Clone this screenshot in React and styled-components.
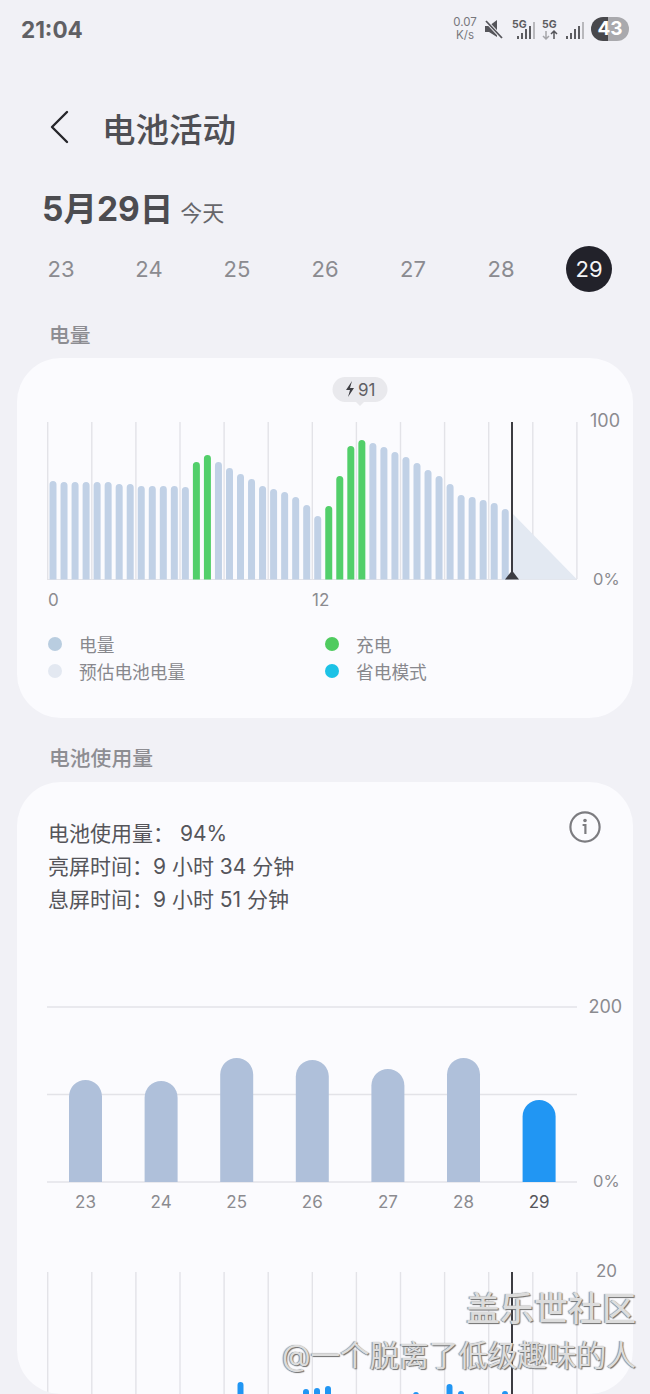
import React from "react";
import styled, { createGlobalStyle } from "styled-components";

const FONT = `Inter, "Noto Sans CJK SC", sans-serif`;

const days = [23, 24, 25, 26, 27, 28, 29];

// bar tops read off the reference, page y coordinates
const levelBars = [
  [481, 0], [482, 0], [482, 0], [482, 0], [482, 0], [482, 0], [484, 0], [484, 0], [486, 0], [486, 0], [486, 0], [486, 0], [487, 0],
  [462, 1], [455, 1],
  [462, 0], [468, 0], [474, 0], [479, 0], [486, 0], [489, 0], [492, 0], [497, 0], [505, 0], [516, 0],
  [506, 1], [476, 1], [446, 1], [440, 1],
  [443, 0], [447, 0], [452, 0], [457, 0], [463, 0], [470, 0], [476, 0], [484, 0], [495, 0], [497, 0], [500, 0], [503, 0], [509, 0],
];

const usageBars = [
  { day: 23, top: 1080 },
  { day: 24, top: 1081 },
  { day: 25, top: 1058 },
  { day: 26, top: 1060 },
  { day: 27, top: 1069 },
  { day: 28, top: 1058 },
  { day: 29, top: 1100, active: true },
];

const hourBars = [
  [240.5, 1382], [306, 1389], [317, 1388], [328, 1386], [416, 1392], [449.5, 1384], [461, 1391], [505, 1391],
];

const gridXs = Array.from({ length: 13 }, (_, i) => 47.7 + i * 44.1);

const topRounded = (x, top, bottom, w) => {
  const r = w / 2;
  return `M${x - r} ${bottom}V${top + r}A${r} ${r} 0 0 1 ${x + r} ${top + r}V${bottom}Z`;
};

const GlobalStyle = createGlobalStyle`
  html, body {
    margin: 0;
    padding: 0;
    background: #f1f1f6;
  }
`;

const Page = styled.div`
  position: relative;
  width: 650px;
  height: 1394px;
  overflow: hidden;
  background: #f1f1f6;
  font-family: ${FONT};
  color: #55555a;
`;

const StatusBar = styled.div`
  height: 58px;
  padding: 0 21px;
  display: flex;
  align-items: center;
  justify-content: space-between;
  box-sizing: border-box;
`;

const Clock = styled.div`
  font-size: 22.5px;
  font-weight: 700;
  color: #606064;
`;

const StatusIcons = styled.div`
  display: flex;
  align-items: center;
  gap: 6px;
`;

const Speed = styled.div`
  width: 26px;
  font-size: 11.5px;
  line-height: 13px;
  text-align: center;
  color: #77777c;
`;

const BatteryPill = styled.div`
  width: 38px;
  height: 24px;
  margin-left: 1px;
  border-radius: 12px;
  background: linear-gradient(90deg, #48484c 0 45%, #a9a9ad 45% 100%);
  color: #fff;
  font-size: 19px;
  font-weight: 700;
  line-height: 24px;
  text-align: center;
`;

const Header = styled.div`
  height: 60px;
  margin-top: 39px;
  padding-left: 49px;
  display: flex;
  align-items: center;
  gap: 32px;
`;

const Title = styled.h1`
  margin: 0;
  font-size: 33.5px;
  font-weight: 500;
  color: #4f4f54;
`;

const DateHead = styled.div`
  height: 50px;
  margin-top: 27px;
  padding-left: 42px;
  display: flex;
  align-items: baseline;
  gap: 7px;
`;

const DateText = styled.span`
  font-size: 33.5px;
  font-weight: 700;
  line-height: 50px;
  color: #4c4c50;
`;

const DateNote = styled.span`
  font-size: 22px;
  color: #66666a;
`;

const DayRow = styled.div`
  height: 46px;
  margin: 12px 17px 0;
  display: grid;
  grid-template-columns: repeat(7, 88px);
`;

const Day = styled.div`
  justify-self: center;
  width: 46px;
  height: 46px;
  border-radius: 50%;
  display: flex;
  align-items: center;
  justify-content: center;
  font-size: 22px;
  color: ${(p) => (p.$active ? "#f4f4f6" : "#8b8b90")};
  background: ${(p) => (p.$active ? "#22222a" : "transparent")};
`;

const SectionLabel = styled.h2`
  height: 30px;
  margin: ${(p) => p.$top}px 0 0;
  padding-left: 49px;
  font-size: 20.8px;
  font-weight: 500;
  line-height: 32px;
  color: #8d8d92;
`;

const Card = styled.section`
  width: 616px;
  height: ${(p) => p.$height}px;
  margin: ${(p) => p.$top}px 0 0 17px;
  border-radius: 44px;
  background: #fbfbfe;
  overflow: hidden;
`;

const ChartSvg = styled.svg`
  display: block;
  width: 616px;
  margin-top: ${(p) => p.$top || 0}px;
  font-family: ${FONT};
`;

const Legend = styled.div`
  display: grid;
  grid-template-columns: 277px 1fr;
  grid-auto-rows: 27px;
  padding-left: 31px;
`;

const LegendItem = styled.div`
  display: flex;
  align-items: center;
  gap: 17px;
  font-size: 17.7px;
  color: #88888d;
`;

const Dot = styled.i`
  width: 14px;
  height: 14px;
  border-radius: 50%;
  background: ${(p) => p.$color};
`;

const UsageHead = styled.div`
  display: flex;
  justify-content: space-between;
  padding: 29px 32px 0 32px;
`;

const UsageLines = styled.div`
  margin-top: 6px;
  margin-left: -1px;
  font-size: 21px;
  line-height: 33px;
  color: #55555a;
`;

const Watermark = styled.div`
  position: absolute;
  right: 14px;
  bottom: 19px;
  text-align: right;
  color: #dcdcdc;
  text-shadow: 1px 1px 1px #6e6e6e, -1px 0 1px #8e8e8e;
`;

const WatermarkTitle = styled.div`
  font-size: 34px;
  font-weight: 500;
  line-height: 46px;
`;

const WatermarkUser = styled.div`
  margin-top: 3px;
  font-size: 29.6px;
  line-height: 40px;
`;

const GridLines = ({ top, bottom }) =>
  gridXs.map((x) => (
    <line key={x} x1={x} x2={x} y1={top} y2={bottom} stroke="#e3e3e8" strokeWidth="1.4" />
  ));

const AxisLabel = ({ x, y, size = 18, color = "#8b8b90", anchor = "start", children }) => (
  <text x={x} y={y} fontSize={size} fill={color} textAnchor={anchor}>
    {children}
  </text>
);

const Signal = () => (
  <svg width="20" height="26" viewBox="0 0 20 26">
    <g fill="#5c5c60">
      <rect x="2" y="20" width="2" height="3" />
      <rect x="6" y="17" width="2" height="6" />
      <rect x="10" y="13" width="2" height="10" />
      <rect x="14" y="10" width="2" height="13" />
    </g>
    <rect x="18" y="6" width="2" height="17" fill="#b8b8bc" />
  </svg>
);

const Net5G = ({ x = 0 }) => (
  <text x={x} y="12" fontSize="10.5" fontWeight="700" fill="#5c5c60" fontFamily={FONT}>
    5G
  </text>
);

const NetSignal = () => (
  <svg width="26" height="26" viewBox="0 0 26 26">
    <Net5G x={2} />
    <g fill="#5c5c60">
      <rect x="7" y="20" width="2" height="3" />
      <rect x="11" y="17" width="2" height="6" />
      <rect x="15" y="13" width="2" height="10" />
      <rect x="19" y="10" width="2" height="13" />
    </g>
    <rect x="23" y="6" width="2" height="17" fill="#b8b8bc" />
  </svg>
);

const NetArrows = () => (
  <svg width="16" height="26" viewBox="0 0 16 26">
    <Net5G />
    <g fill="none" strokeWidth="1.5">
      <path d="M4 15v8M1 20l3 3 3-3" stroke="#a5a5a9" />
      <path d="M12 23v-8M9 18l3-3 3 3" stroke="#55555a" />
    </g>
  </svg>
);

const MuteIcon = () => (
  <svg width="20" height="22" viewBox="0 0 20 22">
    <path d="M1 8h4l8-6v17l-8-5H1z" fill="#55555a" />
    <path d="M2 3l16 17" stroke="#f1f1f6" strokeWidth="3.4" />
    <path d="M2 3l16 17" stroke="#55555a" strokeWidth="1.8" />
  </svg>
);

const BackIcon = () => (
  <svg width="21" height="34" viewBox="0 0 21 34">
    <path d="M18 2L3 17l15 15" fill="none" stroke="#26262a" strokeWidth="2.4" strokeLinecap="round" strokeLinejoin="round" />
  </svg>
);

const InfoIcon = () => (
  <svg width="32" height="32" viewBox="0 0 32 32">
    <circle cx="16" cy="16" r="14.6" fill="none" stroke="#7c7c80" strokeWidth="2.2" />
    <circle cx="16" cy="9.5" r="1.8" fill="#7c7c80" />
    <path d="M13.6 14h2.8v9" fill="none" stroke="#7c7c80" strokeWidth="2.2" />
  </svg>
);

const LevelChart = () => (
  <ChartSvg viewBox="17 358 616 272" height="272">
    <GridLines top={422} bottom={579} />
    <line x1="47" x2="577" y1="579.5" y2="579.5" stroke="#e3e3e8" strokeWidth="1.2" />
    <path d="M512 513L577 579.5H512Z" fill="#e3e9f2" />
    {levelBars.map(([top, charging], i) => (
      <path key={i} d={topRounded(53 + i * 11.03, top, 579.5, 7)} fill={charging ? "#52cf6a" : "#c1d1e6"} />
    ))}
    <line x1="512" x2="512" y1="422" y2="575" stroke="#3c3c42" strokeWidth="2" />
    <path d="M505 579.5L512 570.5L519 579.5Z" fill="#3c3c42" />
    <path d="M345 377h30a12.5 12.5 0 0 1 0 25h-11l-4 4-4-4h-11a12.5 12.5 0 0 1 0-25z" fill="#e9e9ed" />
    <path d="M352 381l-6 9h4l-2 7 6-9h-4z" fill="#3f3f44" />
    <AxisLabel x={358} y={396} size={17} color="#5f5f64">91</AxisLabel>
    <AxisLabel x={590} y={427}>100</AxisLabel>
    <AxisLabel x={593} y={585} size={16.5}>0%</AxisLabel>
    <AxisLabel x={48} y={606} size={17}>0</AxisLabel>
    <AxisLabel x={312} y={606} size={17}>12</AxisLabel>
  </ChartSvg>
);

const UsageChart = () => (
  <ChartSvg viewBox="17 950 616 444" height="444" $top={34}>
    {[1007, 1094.5, 1182].map((y) => (
      <line key={y} x1="47" x2="577" y1={y} y2={y} stroke="#e3e3e8" strokeWidth="1.4" />
    ))}
    {usageBars.map((b, i) => {
      const x = 85.5 + i * 75.6;
      return (
        <g key={b.day}>
          <path d={topRounded(x, b.top, 1182, 33)} fill={b.active ? "#2196f3" : "#afc0da"} />
          <AxisLabel x={x} y={1208} size={17} anchor="middle" color={b.active ? "#55555a" : "#8b8b90"}>
            {b.day}
          </AxisLabel>
        </g>
      );
    })}
    <AxisLabel x={588.5} y={1013}>200</AxisLabel>
    <AxisLabel x={593} y={1187} size={16.5}>0%</AxisLabel>
    <GridLines top={1272} bottom={1394} />
    {hourBars.map(([x, top]) => (
      <path key={x} d={topRounded(x, top, 1396, 6)} fill="#2196f3" />
    ))}
    <line x1="512" x2="512" y1="1272" y2="1394" stroke="#3c3c42" strokeWidth="2" />
    <AxisLabel x={596} y={1277} size={17}>20</AxisLabel>
  </ChartSvg>
);

const App = () => (
  <Page>
    <GlobalStyle />
    <StatusBar>
      <Clock>21:04</Clock>
      <StatusIcons>
        <Speed>
          0.07
          <br />
          K/s
        </Speed>
        <MuteIcon />
        <NetSignal />
        <NetArrows />
        <Signal />
        <BatteryPill>43</BatteryPill>
      </StatusIcons>
    </StatusBar>

    <Header>
      <BackIcon />
      <Title>电池活动</Title>
    </Header>

    <DateHead>
      <DateText>5月29日</DateText>
      <DateNote>今天</DateNote>
    </DateHead>

    <DayRow>
      {days.map((d) => (
        <Day key={d} $active={d === 29}>
          {d}
        </Day>
      ))}
    </DayRow>

    <SectionLabel $top={28}>电量</SectionLabel>
    <Card $top={8} $height={360}>
      <LevelChart />
      <Legend>
        <LegendItem><Dot $color="#b9cde0" />电量</LegendItem>
        <LegendItem><Dot $color="#4fcb5f" />充电</LegendItem>
        <LegendItem><Dot $color="#e3e8f1" />预估电池电量</LegendItem>
        <LegendItem><Dot $color="#1cc2e6" />省电模式</LegendItem>
      </Legend>
    </Card>

    <SectionLabel $top={25}>电池使用量</SectionLabel>
    <Card $top={9} $height={612}>
      <UsageHead>
        <UsageLines>
          电池使用量： 94%
          <br />
          亮屏时间：9 小时 34 分钟
          <br />
          息屏时间：9 小时 51 分钟
        </UsageLines>
        <InfoIcon />
      </UsageHead>
      <UsageChart />
    </Card>

    <Watermark>
      <WatermarkTitle>盖乐世社区</WatermarkTitle>
      <WatermarkUser>@一个脱离了低级趣味的人</WatermarkUser>
    </Watermark>
  </Page>
);

export default App;
